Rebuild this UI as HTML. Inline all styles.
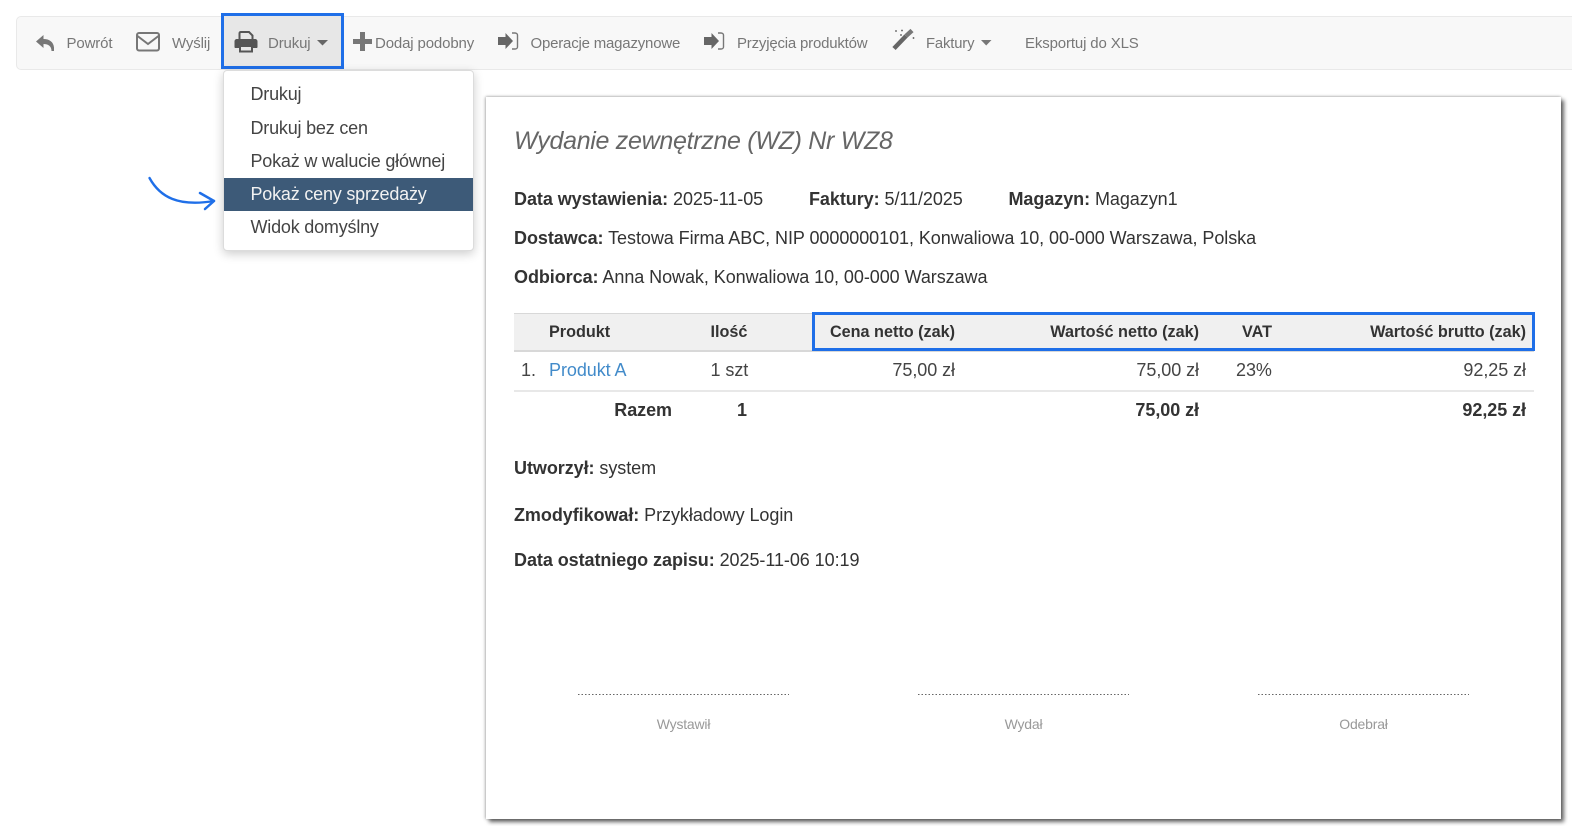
<!DOCTYPE html>
<html lang="pl"><head><meta charset="utf-8"><title>Wydanie zewnętrzne</title>
<style>
html,body{margin:0;padding:0;background:#fff}
body{width:1572px;height:826px;position:relative;overflow:hidden;font-family:"Liberation Sans",sans-serif;color:#333}
.t{position:absolute;white-space:nowrap;line-height:20px;font-size:18px;letter-spacing:-.06px}
.r{text-align:right}
.c{text-align:center}
.nav{font-size:15px;color:#777;letter-spacing:-.14px}
.menu{font-size:18px;color:#444;letter-spacing:-.2px}
.th{font-weight:bold;font-size:16.200px;color:#333;letter-spacing:0}
.abs{position:absolute}
svg{position:absolute;overflow:visible}
b{font-weight:bold}
.sig{position:absolute;top:694px;width:211px;height:1px;background:repeating-linear-gradient(90deg,#666 0,#666 1.500px,transparent 1.500px,transparent 3.500px)}
.lab{font-size:14px;color:#999;width:211px;text-align:center;top:714px;letter-spacing:-.2px}
</style></head><body>

<div class="abs" style="left:16px;top:16px;width:1570px;height:52px;background:#f8f8f8;border:1px solid #e9e9e9;border-radius:5px"></div>
<div class="abs" style="left:221px;top:13px;width:117px;height:50px;background:#e7e7e7;border:3px solid #1f6fe8"></div>

<svg style="left:36px;top:34px" width="20" height="18" viewBox="0 0 20 18"><path d="M0 7.500 7.500 1v4c6 0 10 3 10.500 8.500V17l-2.500 0c0-5-3.500-7-8-7v4z" fill="#777"/></svg>
<div class="t nav" style="left:66.500px;top:34px">Powrót</div>

<svg style="left:136px;top:32px" width="24" height="20" viewBox="0 0 24 20"><rect x="1" y="1" width="22" height="17.500" rx="2" fill="none" stroke="#777" stroke-width="2"/><path d="M1.500 4 12 12 22.500 4" fill="none" stroke="#777" stroke-width="2"/></svg>
<div class="t nav" style="left:172px;top:34px">Wyślij</div>

<svg style="left:234px;top:31px" width="24" height="22" viewBox="0 0 24 22"><path d="M5.500 9V2.500C5.500 1.500 6 1 7 1h8l3.500 3.500V9" fill="none" stroke="#555" stroke-width="2"/><path d="M3 8h18c1.500 0 2.500 1 2.500 2.500V16c0 .8-.5 1-1 1H19v-3H5v3H1.500c-.5 0-1-.2-1-1v-5.500C.5 9 1.500 8 3 8z" fill="#555"/><path d="M6 15h12v5.500H6z" fill="none" stroke="#555" stroke-width="2"/></svg>
<div class="t nav" style="left:268px;top:34px">Drukuj</div>
<svg style="left:317px;top:40px" width="12" height="6" viewBox="0 0 12 6"><path d="M0 0h11L5.500 5.500z" fill="#666"/></svg>

<svg style="left:353px;top:32px" width="19" height="19" viewBox="0 0 19 19"><path d="M7 0h5v7h7v5h-7v7H7v-7H0V7h7z" fill="#777"/></svg>
<div class="t nav" style="left:375px;top:34px">Dodaj podobny</div>

<svg style="left:498px;top:32px" width="21" height="18" viewBox="0 0 21 18"><path d="M0 5h7.500V1L15 9l-7.500 8v-4H0z" fill="#666"/><path d="M14 1h3c1.500 0 2.500 1 2.500 2v12c0 1-1 2-2.500 2h-3" fill="none" stroke="#777" stroke-width="1.400"/></svg>
<div class="t nav" style="left:530.500px;top:34px;letter-spacing:-.2px">Operacje magazynowe</div>

<svg style="left:704px;top:32px" width="21" height="18" viewBox="0 0 21 18"><path d="M0 5h7.500V1L15 9l-7.500 8v-4H0z" fill="#666"/><path d="M14 1h3c1.500 0 2.500 1 2.500 2v12c0 1-1 2-2.500 2h-3" fill="none" stroke="#777" stroke-width="1.400"/></svg>
<div class="t nav" style="left:737px;top:34px;letter-spacing:-.2px">Przyjęcia produktów</div>

<svg style="left:892px;top:29px" width="24" height="23" viewBox="0 0 24 23"><path d="M2 19.500 14 7" stroke="#666" stroke-width="4.500" fill="none"/><path d="M14 7 20 1.500" stroke="#777" stroke-width="4.500" fill="none"/><path d="M3 2h2M4 1v2M9 1.500h2M10 .5v2M8 6h2M9 5v2M20.500 9h2M21.500 8v2" stroke="#777" stroke-width="1"/></svg>
<div class="t nav" style="left:926px;top:34px;font-size:14.800px">Faktury</div>
<svg style="left:981px;top:40px" width="11" height="6" viewBox="0 0 11 6"><path d="M0 0h10.500L5.200 5.500z" fill="#777"/></svg>

<div class="t nav" style="left:1025px;top:34px">Eksportuj do XLS</div>

<div class="abs" style="left:222.500px;top:70px;width:249.500px;height:179px;background:#fff;border:1px solid #dcdcdc;border-radius:4px;box-shadow:0 3px 10px rgba(0,0,0,.2)"></div>
<div class="abs" style="left:223.500px;top:177.500px;width:249.500px;height:33px;background:#3d5a78"></div>
<div class="t menu" style="left:250.500px;top:84px">Drukuj</div>
<div class="t menu" style="left:250.500px;top:118px">Drukuj bez cen</div>
<div class="t menu" style="left:250.500px;top:151px">Pokaż w walucie głównej</div>
<div class="t menu" style="left:250.500px;top:184px;color:#f2f2f2">Pokaż ceny sprzedaży</div>
<div class="t menu" style="left:250.500px;top:217px">Widok domyślny</div>

<svg style="left:148px;top:177px" width="68" height="34" viewBox="0 0 68 34"><path d="M1.500 1C12 20 30 30 66 24" fill="none" stroke="#1f6fe8" stroke-width="2.400" stroke-linecap="round"/><path d="M52 16 66 24 57 32" fill="none" stroke="#1f6fe8" stroke-width="2.500" stroke-linecap="round" stroke-linejoin="round"/></svg>

<div class="abs" style="left:486px;top:97px;width:1074.500px;height:722px;background:#fff;box-shadow:3px 3px 4px rgba(0,0,0,.6),-1px 0 3px rgba(0,0,0,.25),0 -1px 2px rgba(0,0,0,.12)"></div>

<div class="t" style="left:514px;top:126px;font-size:25px;line-height:30px;font-style:italic;color:#666;letter-spacing:-.3px">Wydanie zewnętrzne (WZ) Nr WZ8</div>

<div class="t" style="left:514px;top:189px"><b>Data wystawienia:</b> 2025-11-05</div>
<div class="t" style="left:809px;top:189px"><b>Faktury:</b> 5/11/2025</div>
<div class="t" style="left:1008.500px;top:189px"><b>Magazyn:</b> Magazyn1</div>
<div class="t" style="left:514px;top:228px"><b>Dostawca:</b> Testowa Firma ABC, NIP 0000000101, Konwaliowa 10, 00-000 Warszawa, Polska</div>
<div class="t" style="left:514px;top:267px"><b>Odbiorca:</b> Anna Nowak, Konwaliowa 10, 00-000 Warszawa</div>

<div class="abs" style="left:514px;top:313px;width:1020px;height:36px;background:#f0f0f0;border-top:1px solid #d8d8d8;border-bottom:2px solid #d8d8d8"></div>
<div class="abs" style="left:812px;top:312px;width:717px;height:33px;border:3px solid #1f6fe8"></div>
<div class="abs" style="left:514px;top:390px;width:1020px;height:2px;background:#e8e8e8"></div>

<div class="t th" style="left:549px;top:322px">Produkt</div>
<div class="t th" style="left:710.500px;top:322px">Ilość</div>
<div class="t th r" style="left:755px;width:200px;top:322px">Cena netto (zak)</div>
<div class="t th r" style="left:999px;width:200px;top:322px">Wartość netto (zak)</div>
<div class="t th" style="left:1242px;top:322px">VAT</div>
<div class="t th r" style="left:1276px;width:250px;top:322px">Wartość brutto (zak)</div>

<div class="t" style="left:521px;top:360px;color:#444">1.</div>
<div class="t" style="left:549px;top:360px;color:#428bca">Produkt A</div>
<div class="t" style="left:710.500px;top:360px;color:#444">1 szt</div>
<div class="t r" style="left:755px;width:200px;top:360px;color:#444">75,00 zł</div>
<div class="t r" style="left:999px;width:200px;top:360px;color:#444">75,00 zł</div>
<div class="t" style="left:1236px;top:360px;color:#444">23%</div>
<div class="t r" style="left:1276px;width:250px;top:360px;color:#444">92,25 zł</div>

<div class="t r" style="left:572px;width:100px;top:400px"><b>Razem</b></div>
<div class="t r" style="left:697px;width:50px;top:400px"><b>1</b></div>
<div class="t r" style="left:999px;width:200px;top:400px"><b>75,00 zł</b></div>
<div class="t r" style="left:1276px;width:250px;top:400px"><b>92,25 zł</b></div>

<div class="t" style="left:514px;top:458px"><b>Utworzył:</b> system</div>
<div class="t" style="left:514px;top:504.500px"><b>Zmodyfikował:</b> Przykładowy Login</div>
<div class="t" style="left:514px;top:550px"><b>Data ostatniego zapisu:</b> 2025-11-06 10:19</div>

<div class="sig" style="left:578px"></div>
<div class="sig" style="left:918px"></div>
<div class="sig" style="left:1258px"></div>
<div class="t lab" style="left:578px">Wystawił</div>
<div class="t lab" style="left:918px">Wydał</div>
<div class="t lab" style="left:1258px">Odebrał</div>

</body></html>
